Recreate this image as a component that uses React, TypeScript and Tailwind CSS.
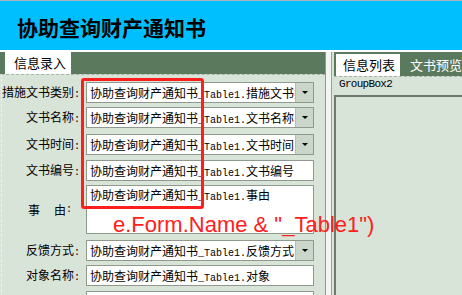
import React from "react";

const ASCII = /^[\x20-\x7e]+$/;

// SimSun-like mix: CJK 12px, ASCII half width 6px
function Mixed({ text }: { text: string }) {
    return (
        <>
            {text
                .split(/([\x20-\x7e]+)/)
                .filter(Boolean)
                .map((p, i) =>
                    ASCII.test(p) ? (
                        <span key={i} className="font-['Liberation_Mono',monospace] text-[10px]">
                            {p}
                        </span>
                    ) : (
                        <span key={i}>{p}</span>
                    )
                )}
        </>
    );
}

const PREFIX = "协助查询财产通知书_Table1.";

type FieldProps = {
    label: React.ReactNode;
    value: string;
    drop?: boolean;
    tall?: boolean;
    className?: string;
};

function Field({ label, value, drop, tall, className }: FieldProps) {
    return (
        <div className={`flex items-center ${tall ? "h-[49px]" : "h-[21px]"} ${className ?? ""}`}>
            <div className="w-[78px] text-right whitespace-nowrap">{label}</div>
            <div className="ml-[6px] w-[228px] h-full flex bg-white border border-[#8d9a8d]">
                <div
                    className={`flex-1 overflow-hidden whitespace-nowrap pl-[3px] ${
                        tall ? "pt-[2px] leading-[14px]" : "leading-[19px]"
                    }`}
                >
                    <Mixed text={PREFIX + value} />
                </div>
                {drop && (
                    <div className="w-[18px] h-full bg-[#c9d6c9] border-l border-[#b3c0b3] flex items-center justify-center">
                        <div className="w-0 h-0 border-l-[3px] border-r-[3px] border-t-[3px] border-l-transparent border-r-transparent border-t-black" />
                    </div>
                )}
            </div>
        </div>
    );
}

export default function App() {
    return (
        <div className="relative w-[462px] h-[295px] overflow-hidden bg-[#d9e4d9] text-black text-[12px] font-['Noto_Sans_CJK_SC',sans-serif]">
            {/* Header */}
            <header className="h-[52px] bg-[#00bfff] border-t border-[#a9b3bc] border-b-2 border-b-white">
                <h1 className="pl-[17px] pt-[16px] text-[21px] leading-[21px] font-bold">协助查询财产通知书</h1>
            </header>

            <div className="flex h-[243px]">
                {/* Left panel */}
                <div className="w-[332px] flex flex-col">
                    <div className="h-[24px] bg-[#5b795c] flex items-end">
                        <div className="ml-[5px] w-[66px] h-[22px] bg-white flex items-center pl-[9px] text-[13px]">
                            信息录入
                        </div>
                    </div>
                    <div className="flex-1 ml-[1px] border-l border-l-[#eef2ee] border-t border-dashed border-t-[#a9b3a9] pt-[7px]">
                        <Field label={<Mixed text="措施文书类别:" />} value="措施文书类别" drop />
                        <Field label={<Mixed text="文书名称:" />} value="文书名称" drop className="mt-[4px]" />
                        <Field label={<Mixed text="文书时间:" />} value="文书时间" drop className="mt-[6px]" />
                        <Field label={<Mixed text="文书编号:" />} value="文书编号" className="mt-[5px]" />
                        <Field
                            label={
                                <span className="inline-flex items-center pr-[8px]">
                                    <span>事</span>
                                    <span className="w-[14px]" />
                                    <Mixed text="由:" />
                                </span>
                            }
                            value="事由"
                            tall
                            className="mt-[4px]"
                        />
                        <Field label={<Mixed text="反馈方式:" />} value="反馈方式" drop className="mt-[6px]" />
                        <Field label={<Mixed text="对象名称:" />} value="对象" className="mt-[4px]" />
                        <Field label={<Mixed text="执行的依据:" />} value="执行依据" className="mt-[5px]" />
                    </div>
                </div>

                {/* Splitter */}
                <div className="flex">
                    <div className="w-px bg-[#8f988f]" />
                    <div className="w-[5px] bg-[#f2f5f2]" />
                    <div className="w-px bg-[#98a098]" />
                    <div className="w-[2px] bg-[#d9e4d9]" />
                </div>

                {/* Right panel */}
                <div className="flex-1 flex flex-col">
                    <div className="h-[24px] bg-[#5b795c] flex items-end">
                        <div className="ml-[2px] w-[64px] h-[22px] bg-white flex items-center pl-[7px] text-[13px]">
                            信息列表
                        </div>
                        <div className="ml-[10px] h-[22px] flex items-center text-[13px] text-white whitespace-nowrap">
                            文书预览
                        </div>
                    </div>
                    <div className="flex-1 flex flex-col border-t border-dashed border-[#a9b3a9]">
                        <div className="pl-[5px] pt-[2px] font-['Liberation_Mono',monospace] text-[11px] leading-[11px] tracking-[-0.7px]">
                            GroupBox2
                        </div>
                        <div className="mt-[5px] flex-1 border-l-2 border-t-2 border-[#6f776f]" />
                    </div>
                </div>
            </div>

            {/* Annotation */}
            <div className="absolute left-[81px] top-[78px] w-[123px] h-[131px] border-[3px] border-[#ff1e1e] rounded-[3px]" />
            <div className="absolute left-[113px] top-[214px] whitespace-nowrap text-[22px] leading-[22px] text-[#ff2020] font-['Liberation_Sans',sans-serif]">
                {'e.Form.Name & "_Table1")'}
            </div>
        </div>
    );
}
